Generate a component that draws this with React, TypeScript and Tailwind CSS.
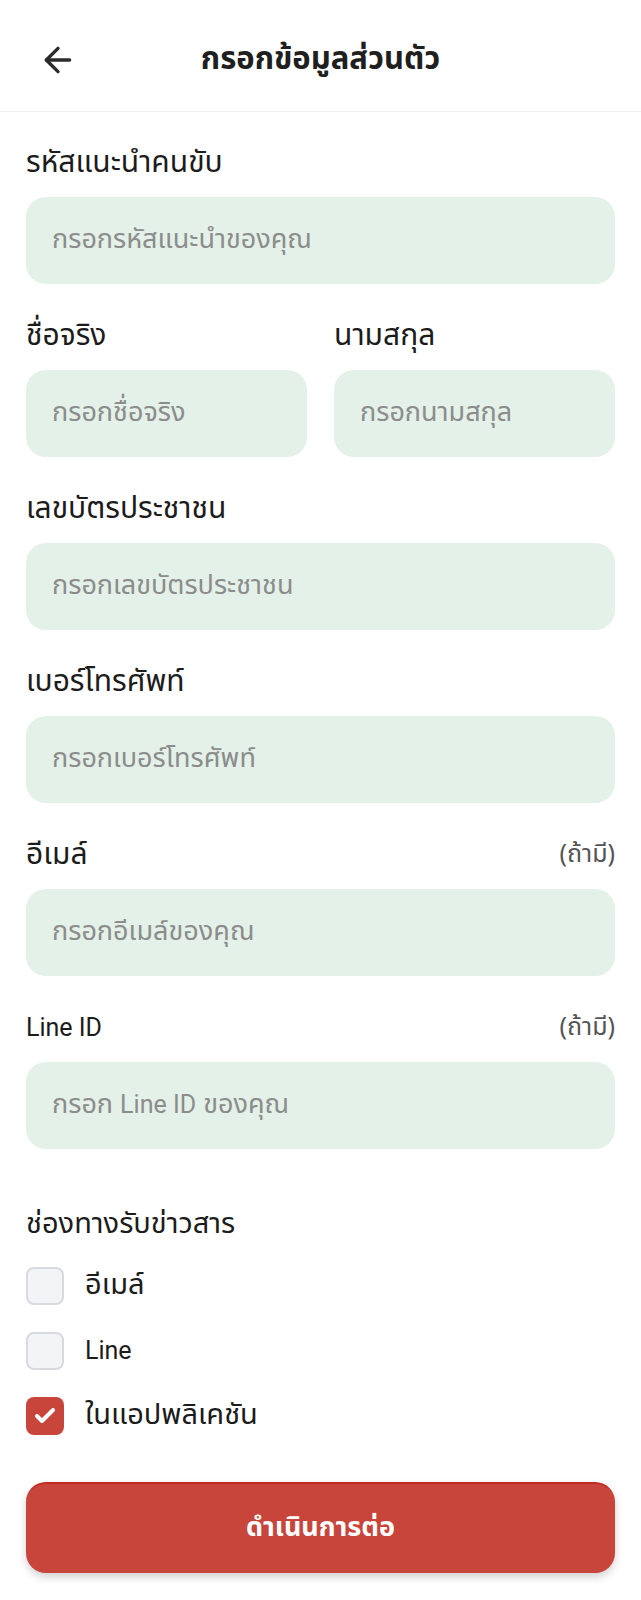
import { ArrowLeft, Check } from "lucide-react";

const font = { fontFamily: '"Noto Sans Thai", "Noto Sans", "Liberation Sans", sans-serif' };
const latinFont = "font-['Roboto',sans-serif]";

const Field = ({ label, placeholder, optional, latin }: { label: React.ReactNode; placeholder: React.ReactNode; optional?: boolean; latin?: boolean }) => (
  <div className="flex flex-col">
    <div className="flex items-center justify-between h-[32px] mb-[18px]">
      <span className={latin ? `${latinFont} text-[25px] text-[#1c1c1c]` : "text-[30px] text-[#1c1c1c]"}>{label}</span>
      {optional && <span className="text-[25px] text-[#555]">(ถ้ามี)</span>}
    </div>
    <div className="h-[87px] rounded-[20px] bg-[#e3f1e8] flex items-center px-[26px]">
      <span className="text-[27px] text-[#8c8c8c]">{placeholder}</span>
    </div>
  </div>
);

const CheckRow = ({ label, checked, latin }: { label: string; checked?: boolean; latin?: boolean }) => (
  <div className="flex items-center gap-[21px] h-[38px]">
    {checked ? (
      <div className="w-[38px] h-[38px] rounded-[8px] bg-[#c8453c] flex items-center justify-center">
        <Check className="w-[24px] h-[24px] text-white" strokeWidth={4} />
      </div>
    ) : (
      <div className="w-[38px] h-[38px] rounded-[8px] bg-[#f3f4f6] border-2 border-[#d8dadf]" />
    )}
    <span className={latin ? `${latinFont} text-[25px] text-[#1c1c1c]` : "text-[29px] text-[#1c1c1c]"}>{label}</span>
  </div>
);

export default function App() {
  return (
    <div className="min-h-screen bg-white" style={font}>
      {/* Header */}
      <div className="relative h-[112px] flex items-center justify-center border-b border-[#f0f0f0]">
        <button className="absolute left-[38px] top-[40px] text-[#2b2b2b]">
          <ArrowLeft className="w-[40px] h-[40px]" strokeWidth={2} />
        </button>
        <h1 className="pt-[10px] text-[31px] font-bold text-[#1f1f1f]">กรอกข้อมูลส่วนตัว</h1>
      </div>

      <div className="px-[26px] pt-[35px] flex flex-col">
        <div className="flex flex-col gap-[36px]">
          <Field label="รหัสแนะนำคนขับ" placeholder="กรอกรหัสแนะนำของคุณ" />
          <div className="grid grid-cols-2 gap-[27px]">
            <Field label="ชื่อจริง" placeholder="กรอกชื่อจริง" />
            <Field label="นามสกุล" placeholder="กรอกนามสกุล" />
          </div>
          <Field label="เลขบัตรประชาชน" placeholder="กรอกเลขบัตรประชาชน" />
          <Field label="เบอร์โทรศัพท์" placeholder="กรอกเบอร์โทรศัพท์" />
          <Field label="อีเมล์" placeholder="กรอกอีเมล์ของคุณ" optional />
          <Field
            label="Line ID"
            latin
            optional
            placeholder={
              <>
                กรอก <span className={`${latinFont} text-[25px]`}>Line ID</span> ของคุณ
              </>
            }
          />
        </div>

        <div className="mt-[60px] h-[32px] flex items-center">
          <span className="text-[29px] text-[#1c1c1c]">ช่องทางรับข่าวสาร</span>
        </div>
        <div className="mt-[26px] flex flex-col gap-[27px]">
          <CheckRow label="อีเมล์" />
          <CheckRow label="Line" latin />
          <CheckRow label="ในแอปพลิเคชัน" checked />
        </div>

        <button className="mt-[47px] h-[91px] rounded-[20px] bg-[#c8453c] border-t-2 border-[#c22a20] shadow-[0_4px_8px_rgba(0,0,0,0.18)] flex items-center justify-center">
          <span className="text-[27px] font-bold text-white">ดำเนินการต่อ</span>
        </button>
      </div>
    </div>
  );
}
